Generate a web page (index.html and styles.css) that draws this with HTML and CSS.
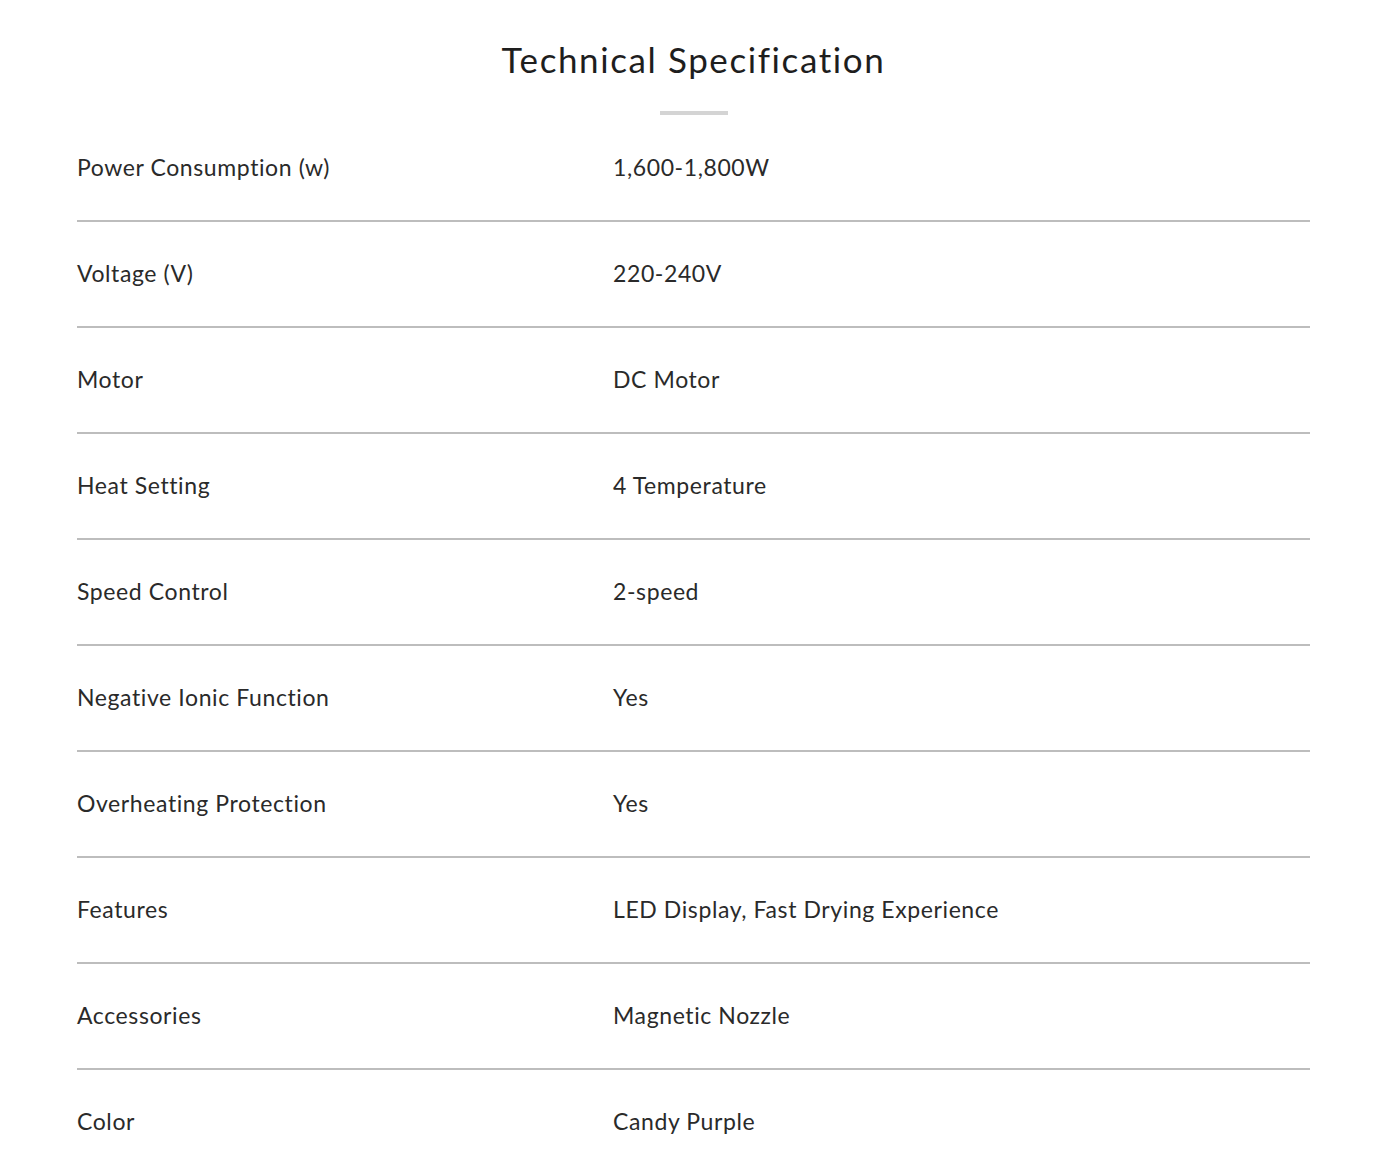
FILE: index.html
```html
<!DOCTYPE html>
<html>
<head>
<meta charset="utf-8">
<link rel="stylesheet" href="styles.css">
</head>
<body>
<section class="spec">
  <h2 class="spec-title">Technical Specification</h2>
  <div class="spec-bar"></div>
  <div class="spec-table">
    <div class="row"><div class="label">Power Consumption (w)</div><div class="value">1,600-1,800W</div></div>
    <div class="row"><div class="label">Voltage (V)</div><div class="value">220-240V</div></div>
    <div class="row"><div class="label">Motor</div><div class="value">DC Motor</div></div>
    <div class="row"><div class="label">Heat Setting</div><div class="value">4 Temperature</div></div>
    <div class="row"><div class="label">Speed Control</div><div class="value">2-speed</div></div>
    <div class="row"><div class="label">Negative Ionic Function</div><div class="value">Yes</div></div>
    <div class="row"><div class="label">Overheating Protection</div><div class="value">Yes</div></div>
    <div class="row"><div class="label">Features</div><div class="value">LED Display, Fast Drying Experience</div></div>
    <div class="row"><div class="label">Accessories</div><div class="value">Magnetic Nozzle</div></div>
    <div class="row"><div class="label">Color</div><div class="value">Candy Purple</div></div>
  </div>
</section>
</body>
</html>
```
FILE: styles.css
```css
html, body {
  margin: 0;
  padding: 0;
  background: #fff;
}
body {
  font-family: "Lato", "Noto Sans", sans-serif;
  color: #222;
  font-variant-ligatures: none;
}
.spec {
  width: 1233px;
  margin-left: 77px;
  padding-top: 36px;
}
.spec-title {
  margin: 0;
  text-align: center;
  font-size: 35px;
  font-weight: 400;
  letter-spacing: 1.6px;
  line-height: 46px;
  color: #1e1e1e;
}
.spec-bar {
  width: 68px;
  height: 4px;
  background: #d4d4d4;
  margin: 29px auto 1px;
}
.row {
  display: flex;
  align-items: center;
  box-sizing: content-box;
  height: 102px;
  padding-bottom: 2px;
  border-bottom: 2px solid #bdbdbd;
  font-size: 23px;
  letter-spacing: 0.6px;
  color: #2a2a2a;
}
.label {
  width: 536px;
  flex: none;
}
.value {
  flex: 1;
}
```
